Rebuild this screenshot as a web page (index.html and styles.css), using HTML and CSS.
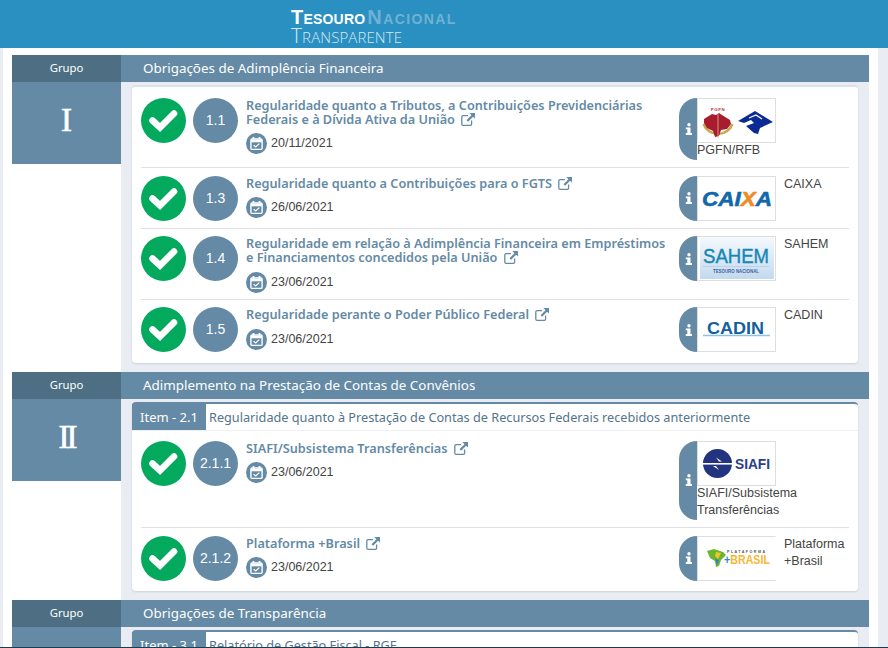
FILE: index.html
```html
<!DOCTYPE html>
<html lang="pt-BR">
<head>
<meta charset="utf-8">
<title>Tesouro Nacional Transparente</title>
<link rel="stylesheet" href="styles.css">
</head>
<body>
<svg class="defs" width="0" height="0">
	<symbol id="ok" viewBox="0 0 45 45">
		<circle cx="22.5" cy="22.5" r="22.5" fill="#03a95d"/>
		<path d="M11.5 22.5 19 29.5 33 15.5" fill="none" stroke="#fff" stroke-width="6.6" stroke-linecap="round"/>
	</symbol>
	<symbol id="cal" viewBox="0 0 21 21">
		<circle cx="10.5" cy="10.5" r="10.5" fill="#648aa5"/>
		<rect x="4.9" y="6" width="11.2" height="10.4" rx="1.2" fill="none" stroke="#fff" stroke-width="1.4"/>
		<path d="M4.9 8h11.2" stroke="#fff" stroke-width="2.6"/>
		<path d="M7.5 4v3M13.5 4v3" stroke="#fff" stroke-width="1.8"/>
		<path d="M7.6 12.2 9.7 14l3.6-3.4" fill="none" stroke="#fff" stroke-width="1.2"/>
	</symbol>
	<symbol id="ext" viewBox="0 0 14 13">
		<path d="M7 2.6H2.2A1.4 1.4 0 0 0 .8 4v7.2a1.2 1.2 0 0 0 1.2 1.1h7.4a1.3 1.3 0 0 0 1.2-1.3V7.6" fill="none" stroke="#648aa5" stroke-width="1.3"/>
		<path d="M8.4 0H14v5.6l-1.9-1.8-5 5-1.6-1.6 5-5z" fill="#648aa5"/>
	</symbol>
	<symbol id="info" viewBox="0 0 8 12">
		<circle cx="4" cy="1.7" r="1.7" fill="#fff"/>
		<path d="M.8 4.4h4.7v5.7H7V12H.8v-1.9h1.5V6.3H.8z" fill="#fff"/>
	</symbol>
</svg>

<header class="topo">
	<div class="marca">
		<div class="marca-l1"><b>Tesouro</b><span>Nacional</span></div>
		<div class="marca-l2">Transparente</div>
	</div>
</header>

<main class="conteudo">

	<section class="grupo">
		<div class="grupo-lado">
			<div class="grupo-rot">Grupo</div>
			<div class="grupo-num">I</div>
		</div>
		<div class="grupo-corpo">
			<h2 class="grupo-tit">Obrigações de Adimplência Financeira</h2>
			<div class="cartao">
				<div class="linhas">
					<div class="linha">
						<svg class="bola"><use href="#ok"/></svg>
						<div class="num">1.1</div>
						<div class="texto">
							<a class="tit" href="#">Regularidade quanto a Tributos, a Contribuições Previdenciárias Federais e à Dívida Ativa da União <svg class="ext"><use href="#ext"/></svg></a>
							<div class="data"><svg class="cal"><use href="#cal"/></svg>20/11/2021</div>
						</div>
						<div class="fonte fonte-col">
							<div class="aba"><svg class="i"><use href="#info"/></svg></div>
							<div class="fonte-info">
								<div class="logo">
									<svg viewBox="0 0 77 43" width="77" height="43">
										<text x="20" y="12" font-size="4.4" font-weight="700" fill="#b5353f" text-anchor="middle" font-family="Liberation Sans" letter-spacing=".6">PGFN</text>
										<path d="M5.5 19a15.5 15.5 0 0 0 29 0" transform="translate(0 6)" fill="none" stroke="#c9a84f" stroke-width="2.6"/>
										<path d="M6 20l8-5 4 1 3-2 3 2 8 5 1 4-4 5-6 1-2 6-4 1-2-6-6-3-3-5z" fill="#a81c2e"/>
										<path d="M20 15v24" stroke="#d9b9a0" stroke-width=".8"/>
										<path d="M40 22l17-10 18 11-13 6-2 6-4-1-8-7 8-3-3-3-7 3z" fill="#0c2a93"/>
										<path d="M51 19l7-3 6 4" fill="none" stroke="#fff" stroke-width="1.2"/>
									</svg>
								</div>
								<div class="fonte-nome">PGFN/RFB</div>
							</div>
						</div>
					</div>

					<div class="linha">
						<svg class="bola"><use href="#ok"/></svg>
						<div class="num">1.3</div>
						<div class="texto">
							<a class="tit" href="#">Regularidade quanto a Contribuições para o FGTS <svg class="ext"><use href="#ext"/></svg></a>
							<div class="data"><svg class="cal"><use href="#cal"/></svg>26/06/2021</div>
						</div>
						<div class="fonte">
							<div class="aba"><svg class="i"><use href="#info"/></svg></div>
							<div class="fonte-info">
								<div class="logo">
									<svg viewBox="0 0 77 43" width="77" height="43">
										<text x="4" y="29" font-size="21" font-weight="700" font-style="italic" font-family="Liberation Sans" fill="#0f68ad" stroke="#0f68ad" stroke-width=".6" textLength="70" lengthAdjust="spacingAndGlyphs">CAI<tspan fill="#f08a24" stroke="#f08a24">X</tspan>A</text>
									</svg>
								</div>
								<div class="fonte-nome">CAIXA</div>
							</div>
						</div>
					</div>

					<div class="linha">
						<svg class="bola"><use href="#ok"/></svg>
						<div class="num">1.4</div>
						<div class="texto">
							<a class="tit" href="#">Regularidade em relação à Adimplência Financeira em Empréstimos e Financiamentos concedidos pela União <svg class="ext"><use href="#ext"/></svg></a>
							<div class="data"><svg class="cal"><use href="#cal"/></svg>23/06/2021</div>
						</div>
						<div class="fonte">
							<div class="aba"><svg class="i"><use href="#info"/></svg></div>
							<div class="fonte-info">
								<div class="logo">
									<svg viewBox="0 0 77 43" width="77" height="43">
										<defs>
											<linearGradient id="sahem" x1="0" y1="0" x2="0" y2="1">
												<stop offset="0" stop-color="#f4f9fd"/>
												<stop offset="1" stop-color="#c3d9ef"/>
											</linearGradient>
										</defs>
										<rect x="2" width="74" height="42" fill="url(#sahem)"/>
										<text x="5" y="26" font-size="20" font-family="Liberation Sans" fill="#1487b5" stroke="#1487b5" stroke-width=".4" textLength="66" lengthAdjust="spacingAndGlyphs">SAHEM</text>
										<path d="M5 29.5h66" stroke="#a9c6de" stroke-width=".6"/>
										<text x="15" y="36" font-size="4.6" font-weight="700" font-family="Liberation Sans" fill="#3a62a0" textLength="46" lengthAdjust="spacingAndGlyphs">TESOURO NACIONAL</text>
									</svg>
								</div>
								<div class="fonte-nome">SAHEM</div>
							</div>
						</div>
					</div>

					<div class="linha">
						<svg class="bola"><use href="#ok"/></svg>
						<div class="num">1.5</div>
						<div class="texto">
							<a class="tit" href="#">Regularidade perante o Poder Público Federal <svg class="ext"><use href="#ext"/></svg></a>
							<div class="data"><svg class="cal"><use href="#cal"/></svg>23/06/2021</div>
						</div>
						<div class="fonte">
							<div class="aba"><svg class="i"><use href="#info"/></svg></div>
							<div class="fonte-info">
								<div class="logo">
									<svg viewBox="0 0 77 43" width="77" height="43">
										<text x="9" y="26" font-size="17" font-weight="700" font-family="Liberation Sans" fill="#145f9e" textLength="57" lengthAdjust="spacingAndGlyphs">CADIN</text>
										<path d="M5 27.5h67" stroke="#8cc3e6" stroke-width="1.6"/>
									</svg>
								</div>
								<div class="fonte-nome">CADIN</div>
							</div>
						</div>
					</div>
				</div>
			</div>
		</div>
	</section>

	<section class="grupo">
		<div class="grupo-lado">
			<div class="grupo-rot">Grupo</div>
			<div class="grupo-num grupo-num-2">II</div>
		</div>
		<div class="grupo-corpo">
			<h2 class="grupo-tit">Adimplemento na Prestação de Contas de Convênios</h2>
			<div class="cartao cartao-item">
				<div class="item">
					<div class="item-rot">Item - 2.1</div>
					<div class="item-tit">Regularidade quanto à Prestação de Contas de Recursos Federais recebidos anteriormente</div>
				</div>
				<div class="linhas">
					<div class="linha">
						<svg class="bola"><use href="#ok"/></svg>
						<div class="num">2.1.1</div>
						<div class="texto">
							<a class="tit" href="#">SIAFI/Subsistema Transferências <svg class="ext"><use href="#ext"/></svg></a>
							<div class="data"><svg class="cal"><use href="#cal"/></svg>23/06/2021</div>
						</div>
						<div class="fonte fonte-col">
							<div class="aba"><svg class="i"><use href="#info"/></svg></div>
							<div class="fonte-info">
								<div class="logo">
									<svg viewBox="0 0 77 43" width="77" height="43">
										<circle cx="19.5" cy="21.5" r="14.5" fill="#22347f"/>
										<path d="M4 19.5h17l-3-4 6 4zM35 24H18l3 4-6-4z" fill="#fff"/>
										<path d="M4 21h31v1.6H4z" fill="#fff"/>
										<text x="37" y="27" font-size="14" font-weight="700" font-family="Liberation Sans" fill="#2a3e8b" textLength="35" lengthAdjust="spacingAndGlyphs">SIAFI</text>
									</svg>
								</div>
								<div class="fonte-nome">SIAFI/Subsistema Transferências</div>
							</div>
						</div>
					</div>

					<div class="linha">
						<svg class="bola"><use href="#ok"/></svg>
						<div class="num">2.1.2</div>
						<div class="texto">
							<a class="tit" href="#">Plataforma +Brasil <svg class="ext"><use href="#ext"/></svg></a>
							<div class="data"><svg class="cal"><use href="#cal"/></svg>23/06/2021</div>
						</div>
						<div class="fonte">
							<div class="aba"><svg class="i"><use href="#info"/></svg></div>
							<div class="fonte-info">
								<div class="logo logo-aberto">
									<svg viewBox="0 0 77 43" width="77" height="43">
										<path d="M9 14l7-2 9 3 3 3-5 5-2 6-3 1-1-6-5-3z" fill="#6bb52f"/>
										<path d="M18 15l5 1-3 6-3-3z" fill="#f4c430"/>
										<path d="M17 22l4 1-2 5z" fill="#2a7fd0"/>
										<text x="29" y="16" font-size="3.6" font-weight="700" font-family="Liberation Sans" fill="#555" textLength="38" lengthAdjust="spacing">PLATAFORMA</text>
										<text x="26" y="27" font-size="12" font-weight="700" font-family="Liberation Sans" fill="#f7b733" textLength="46" lengthAdjust="spacingAndGlyphs"><tspan fill="#2a8ad6">+</tspan>BRASIL</text>
									</svg>
								</div>
								<div class="fonte-nome">Plataforma +Brasil</div>
							</div>
						</div>
					</div>
				</div>
			</div>
		</div>
	</section>

	<section class="grupo">
		<div class="grupo-lado">
			<div class="grupo-rot">Grupo</div>
			<div class="grupo-num">III</div>
		</div>
		<div class="grupo-corpo">
			<h2 class="grupo-tit">Obrigações de Transparência</h2>
			<div class="cartao cartao-item">
				<div class="item">
					<div class="item-rot">Item - 3.1</div>
					<div class="item-tit">Relatório de Gestão Fiscal - RGF</div>
				</div>
			</div>
		</div>
	</section>

</main>
<div class="base"></div>
</body>
</html>
```
FILE: styles.css
```css
*{ margin:0; padding:0; box-sizing:border-box;}
html,body{ height:648px; overflow:hidden;}
body{ background:#e9edf3; font:12.5px/17px "Liberation Sans",Arial,sans-serif; color:#444;}
.defs{ position:absolute;}
a{ text-decoration:none;}

.topo{ height:48px; background:#2a8fc1; padding:9px 0 0 291px;}
.marca{ font-family:"Liberation Sans",Arial,sans-serif; font-variant:small-caps; white-space:nowrap;}
.marca-l1{ font-size:20px; line-height:17px; display:flex;}
.marca-l1 b{ color:#fff; letter-spacing:.2px;}
.marca-l1 span{ color:#6fb2d3; font-weight:700; margin-left:2px; letter-spacing:1.4px;}
.marca-l2{ font-family:"Open Sans",sans-serif; font-weight:300; font-size:21px; line-height:17px; margin-top:1px; color:#d5e9f3; letter-spacing:.1px;}

.conteudo{ margin:0 10px 0 3px; background:#fff; padding:7px 9px 0; height:600px; overflow:hidden;}
.grupo{ display:flex;}
.grupo-lado{ width:109px; flex:none;}
.grupo-rot{ height:27px; background:#4e6f83; color:#fff; font:11.3px/26px "Noto Sans",sans-serif; text-align:center;}
.grupo-num{ height:82px; background:#648aa5; color:#fff; font:400 33px/76px "Liberation Serif",serif; text-align:center; -webkit-text-stroke:.6px #fff;}
.grupo-num-2{ letter-spacing:-3px;}
.grupo-corpo{ flex:1; min-width:0; background:#e9edf3; padding-bottom:9px;}
.grupo-tit{ height:27px; background:#648aa5; color:#fff; font:400 13.4px/26px "Noto Sans",sans-serif; padding-left:22px;}

.cartao{ margin:3px 11px 0; background:#fff; border-top:2px solid #dde1e8; border-radius:4px; box-shadow:0 1px 2px rgba(0,0,0,.12);}
.cartao-item{ border-top-color:#648aa5;}
.item{ display:flex; align-items:center; height:26px; box-shadow:0 1px 0 #eef0f3;}
.item-rot{ width:74px; height:26px; background:#648aa5; color:#fff; font:13px/26px "Noto Sans",sans-serif; text-align:center; flex:none;}
.item-tit{ margin-left:3px; color:#54748b; font:12.7px/26px "Noto Sans",sans-serif; white-space:nowrap;}

.linhas{ padding:3.7px 9px 3.4px;}
.linha{ display:flex; padding:7.3px 0;}
.linha + .linha{ border-top:1px solid #dfe1e4;}
.bola{ width:45px; height:45px; flex:none;}
.num{ width:45px; height:45px; border-radius:50%; background:#648aa5; color:#fff; font-size:14px; line-height:45px; text-align:center; margin-left:7px; flex:none;}
.texto{ flex:1; min-width:0; margin-left:8px; padding-right:8px; margin-bottom:-.5px;}
.tit{ display:block; color:#648aa5; font:600 12.7px/14px "Noto Sans",sans-serif;}
.ext{ width:14px; height:13px; margin-left:3px; vertical-align:-2px;}
.data{ display:flex; align-items:center; margin-top:8px; height:20px; color:#444;}
.cal{ width:21px; height:21px; margin-right:4px; flex:none;}

.fonte{ width:170px; flex:none; display:flex;}
.aba{ width:18px; height:45px; background:#648aa5; border-radius:18px 0 0 18px; display:flex; align-items:center; justify-content:center; flex:none;}
.fonte-col .aba{ height:auto;}
.i{ width:8px; height:12px; margin-left:1px;}
.fonte-info{ flex:1; display:flex; min-width:0;}
.fonte-col .fonte-info{ flex-direction:column;}
.logo{ width:79px; height:45px; border:1px solid #dedede; flex:none;}
.logo svg{ display:block;}
.logo-aberto{ border-right-color:transparent;}
.fonte-nome{ margin-left:8px;}
.fonte-col .fonte-nome{ margin:-.5px 0 .5px;}

.base{ position:fixed; left:0; right:0; bottom:0; height:1px; background:#1d3b4f;}
```
